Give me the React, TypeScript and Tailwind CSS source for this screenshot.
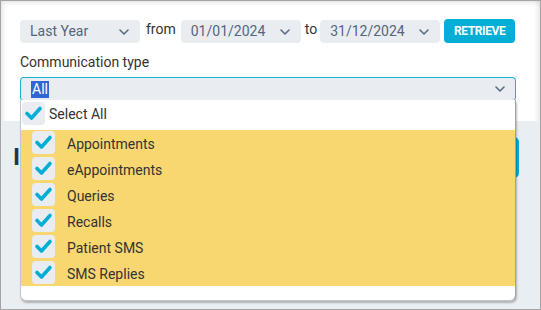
import * as React from "react";

const font = { fontFamily: "Roboto, 'Noto Sans', sans-serif" };

function Chevron({ className = "" }: { className?: string }) {
  return (
    <svg width="10" height="6" viewBox="0 0 10 6" className={className}>
      <polyline points="1,1 5,5 9,1" fill="none" stroke="#5b6b80" strokeWidth="1.6" strokeLinecap="round" strokeLinejoin="round" />
    </svg>
  );
}

function Check() {
  return (
    <div className="w-[23px] h-[23px] rounded-[4px] bg-[#e9edf2] flex items-center justify-center shrink-0">
      <svg width="23" height="23" viewBox="0 0 23 23">
        <polyline points="5,11.5 9.5,16 18,6.5" fill="none" stroke="#00add5" strokeWidth="3.6" strokeLinecap="round" strokeLinejoin="round" />
      </svg>
    </div>
  );
}

function Select({ value }: { value: string }) {
  return (
    <div className="w-[120px] h-[23px] rounded-[4px] bg-[#e9edf2] flex items-center justify-between pl-[10px] pr-[11px] shrink-0">
      <span className="text-[14px] text-[#56657a]">{value}</span>
      <Chevron />
    </div>
  );
}

const items = ["Appointments", "eAppointments", "Queries", "Recalls", "Patient SMS", "SMS Replies"];

export default function App() {
  return (
    <div
      className="relative w-[541px] h-[310px] border border-[#a4a4a4] bg-white overflow-hidden shadow-[inset_2px_2px_4px_rgba(0,0,0,0.10),inset_-3px_-3px_4px_rgba(0,0,0,0.08)]"
      style={font}
    >
      <div className="h-[120px] pl-[19px] pr-[24px] pt-[19px]">
        <div className="flex items-start">
          <Select value="Last Year" />
          <span className="ml-[6px] text-[14px] leading-[18px] text-[#333]">from</span>
          <div className="ml-[5px]">
            <Select value="01/01/2024" />
          </div>
          <span className="ml-[4px] text-[14px] leading-[18px] text-[#333]">to</span>
          <div className="ml-[3px]">
            <Select value="31/12/2024" />
          </div>
          <button className="ml-[4px] w-[71px] h-[24px] -mt-px rounded-[4px] bg-[#00aed6] text-white text-[12px] font-bold tracking-[-0.4px]">
            RETRIEVE
          </button>
        </div>
        <div className="mt-[9px] text-[14px] leading-[20px] text-[#333]">Communication type</div>
        <div className="mt-[5px] h-[24px] rounded-[4px] border border-[#1fb3d8] border-b-[#a9b0b8] bg-[#e9edf2] flex items-center justify-between pl-[10px] pr-[10px]">
          <span className="text-[14px] leading-[17px] bg-[#2f66d4] text-white px-px">All</span>
          <Chevron />
        </div>
      </div>

      <div className="h-[190px] bg-[#e9eef2] relative">
        <div className="absolute left-[12px] top-[22px] text-[24px] font-bold text-[#1d3650] leading-[28px]">I</div>
        <div className="absolute left-[458px] top-[16px] w-[60px] h-[41px] rounded-[5px] bg-[#00aed6]" />
      </div>

      <div className="absolute left-[19px] top-[99px] w-[496px] h-[201px] bg-white border border-[#c2c6cc] border-t-0 border-r-[#9ea3aa] rounded-b-[6px] shadow-[1px_2px_2px_rgba(0,0,0,0.25)] flex flex-col">
        <div className="h-[30px] flex items-start pt-[2px] pl-[1px]">
          <Check />
          <span className="ml-[4px] text-[14px] leading-[24px] text-[#333]">Select All</span>
        </div>
        <div className="bg-[#f8d770] flex flex-col">
          {items.map((it) => (
            <div key={it} className="h-[26px] flex items-start pt-[1px] pl-[11px]">
              <Check />
              <span className="ml-[12px] text-[14px] leading-[26px] text-[#333]">{it}</span>
            </div>
          ))}
        </div>
      </div>
    </div>
  );
}
